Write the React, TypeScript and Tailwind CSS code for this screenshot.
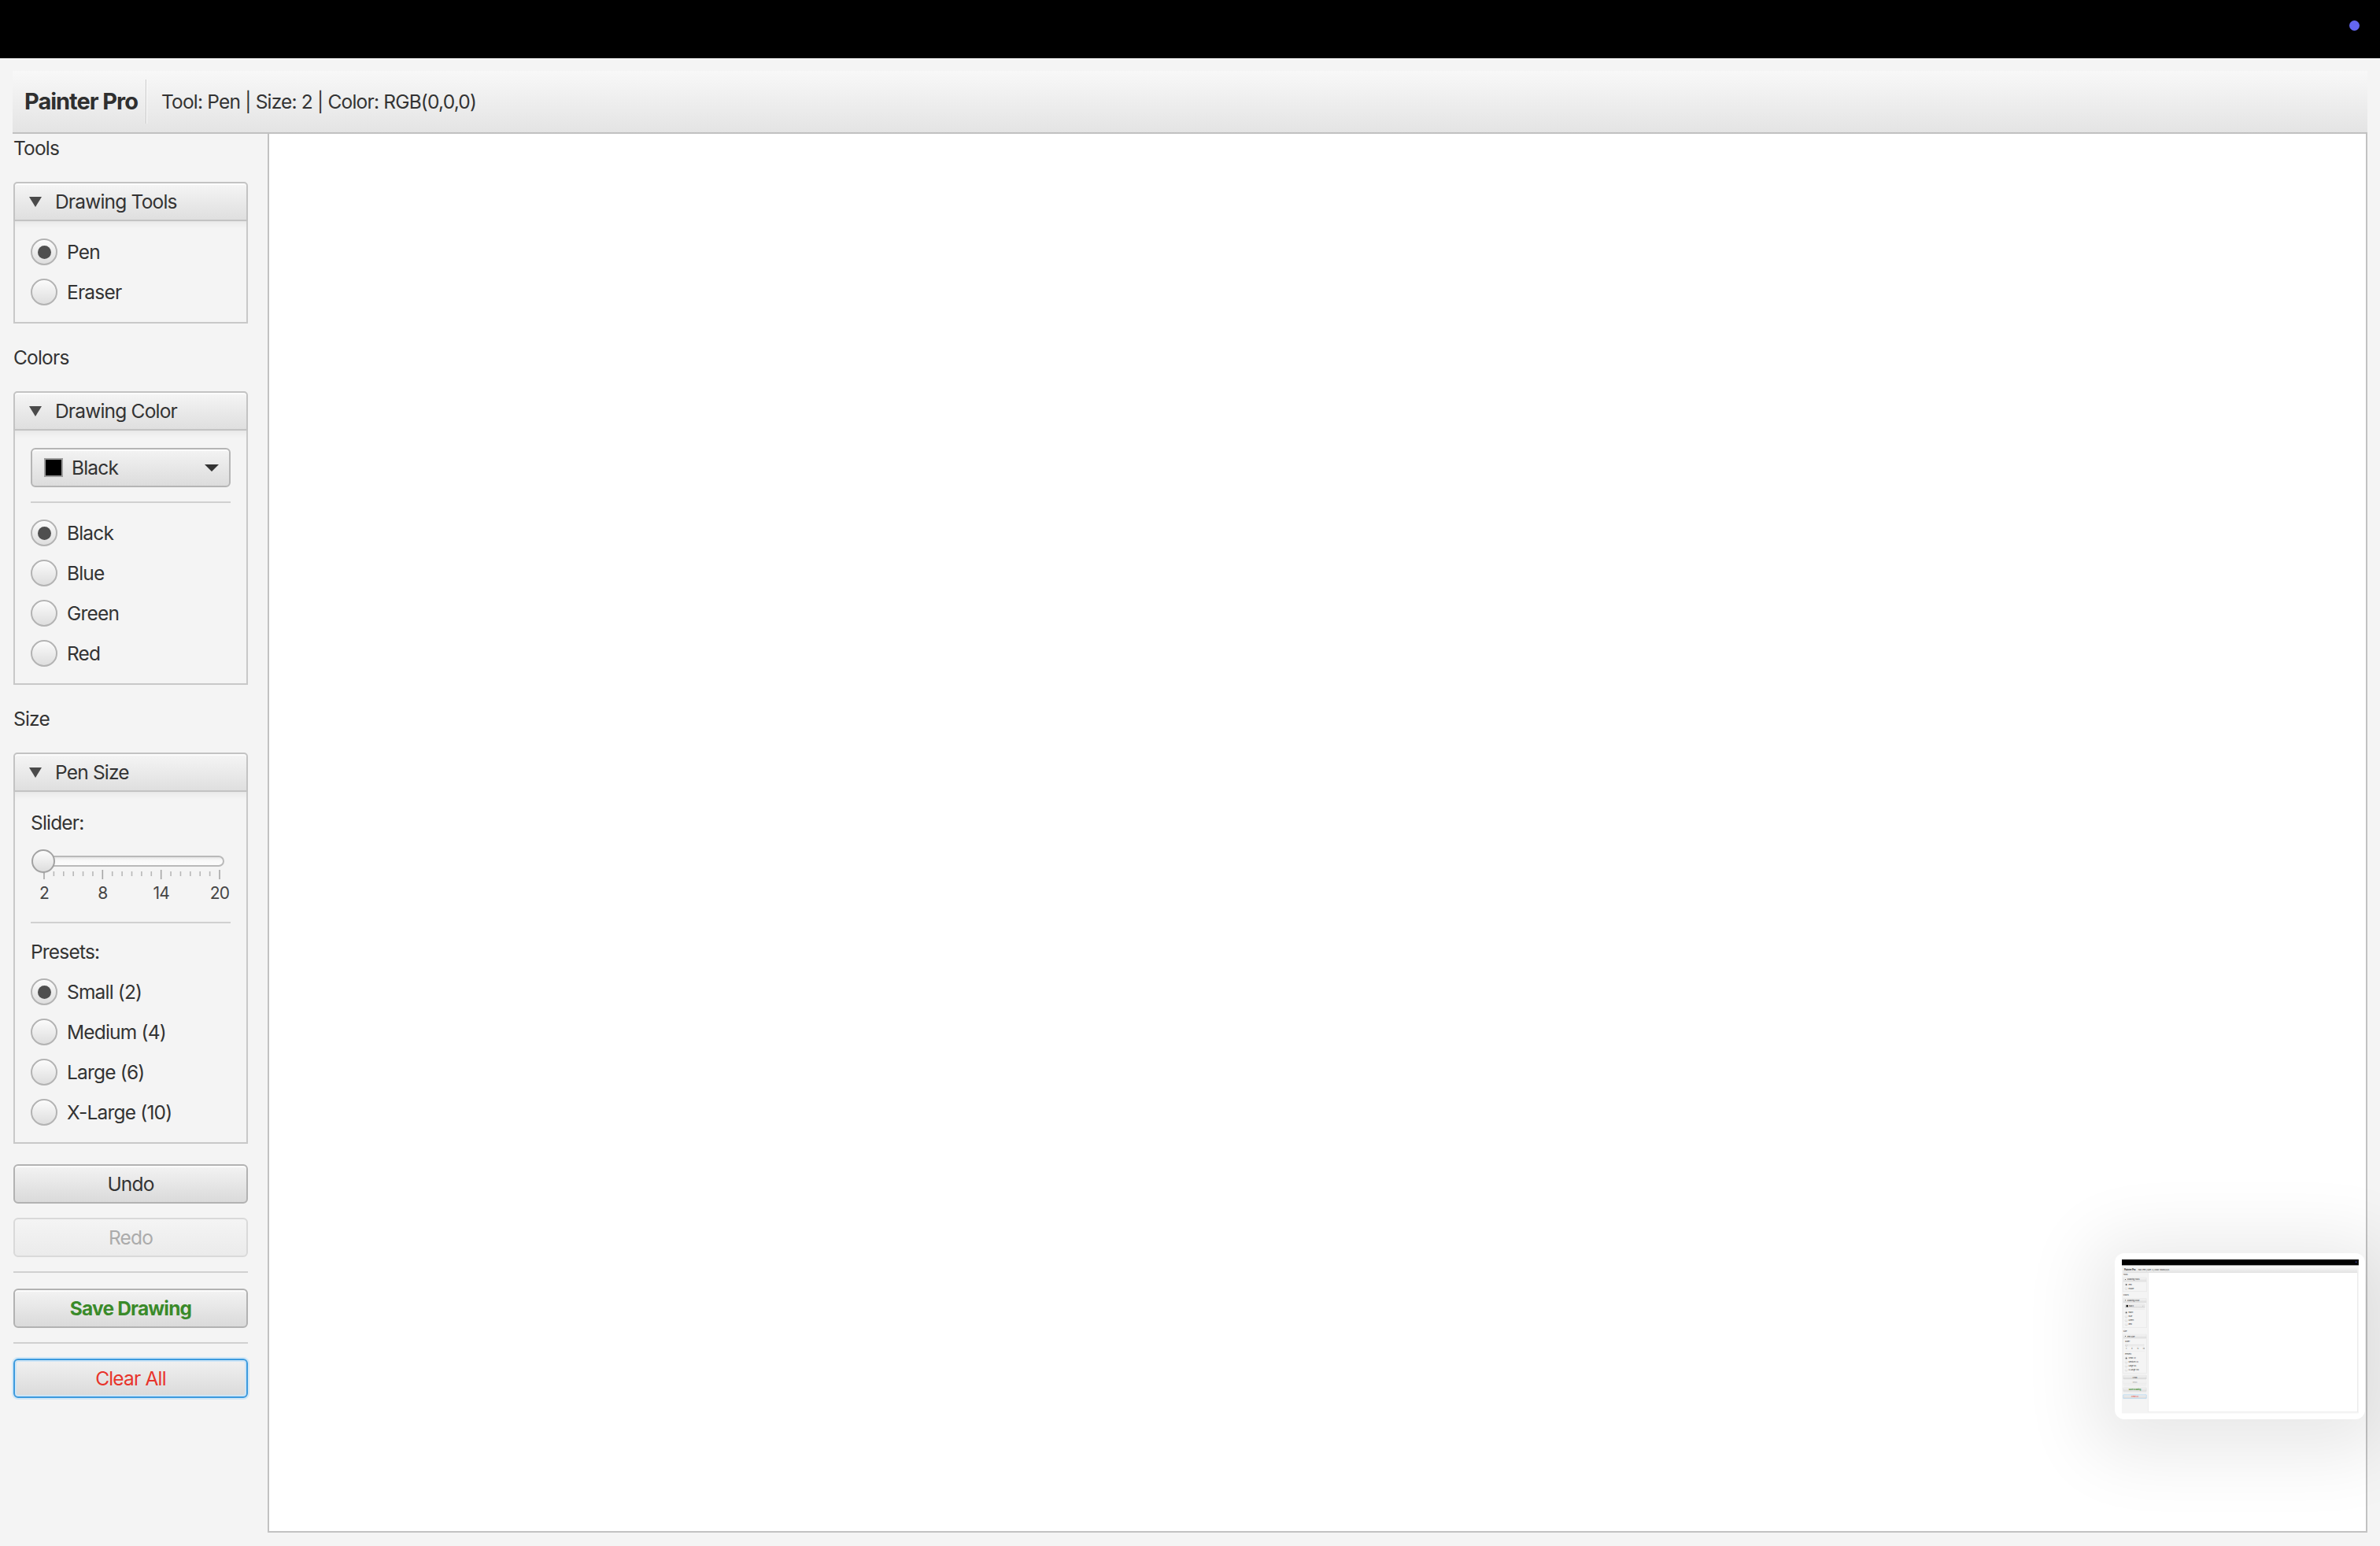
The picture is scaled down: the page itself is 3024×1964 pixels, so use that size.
import React, { useId } from 'react'

type RadioProps = { label: string; checked?: boolean }

function Radio({ label, checked = false }: RadioProps) {
  return (
    <div className="flex h-[34px] items-center">
      <span className="flex h-[34px] w-[34px] items-center justify-center rounded-full border-2 border-[#b3b3b3] bg-linear-to-b from-[#fbfbfb] to-[#dedede] shadow-[inset_0_1px_0_#ffffff]">
        {checked && <span className="h-[17px] w-[17px] rounded-full bg-[#4f4f4f]" />}
      </span>
      <span className="ml-[12px]">{label}</span>
    </div>
  )
}

function SectionLabel({ children }: { children: React.ReactNode }) {
  return <div className="h-[34px] leading-[34px]">{children}</div>
}

function Divider({ className = '' }: { className?: string }) {
  return <div className={'h-[2px] bg-[#d0d0d0] ' + className} />
}

function TitledPane({ title, children }: { title: string; children: React.ReactNode }) {
  return (
    <div className="w-[298px]">
      <div className="flex h-[50px] items-center rounded-t-[5px] border-2 border-[#c3c3c3] bg-linear-to-b from-[#f5f5f5] to-[#dfdfdf] pl-[18px] shadow-[inset_0_2px_0_#fcfcfc]">
        <svg width="16" height="13" viewBox="0 0 16 13">
          <polygon points="0,0 16,0 8,13" fill="#4a4a4a" />
        </svg>
        <span className="ml-[17px]">{title}</span>
      </div>
      <div className="flex flex-col border-2 border-t-0 border-[#c8c8c8] px-[20px] pt-[22px] pb-[21px] shadow-[inset_0_10px_10px_-8px_rgba(0,0,0,0.07)]">
        {children}
      </div>
    </div>
  )
}

function ColorCombo() {
  return (
    <div className="flex h-[50px] items-center rounded-[6px] border-2 border-[#b5b5b5] bg-linear-to-b from-[#f3f3f3] to-[#dcdcdc] pl-[15px] pr-[13px] shadow-[inset_0_2px_0_#fbfbfb]">
      <span className="h-[24px] w-[24px] border-2 border-[#9c9c9c] bg-black" />
      <span className="ml-[11px]">Black</span>
      <svg className="ml-auto" width="18" height="9" viewBox="0 0 18 9">
        <polygon points="0,0 18,0 9,9" fill="#333333" />
      </svg>
    </div>
  )
}

function SizeSlider() {
  const gid = useId().replace(/:/g, '')
  const first = 17
  const last = 240
  const step = (last - first) / 18
  const ticks = Array.from({ length: 19 }, (_, i) => i)
  const majors = [
    { x: first, v: '2' },
    { x: first + step * 6, v: '8' },
    { x: first + step * 12, v: '14' },
    { x: last, v: '20' },
  ]
  return (
    <svg className="mt-[10px]" width="254" height="80" viewBox="0 0 254 80">
      <defs>
        <linearGradient id={'thumb' + gid} x1="0" y1="0" x2="0" y2="1">
          <stop offset="0" stopColor="#fdfdfd" />
          <stop offset="1" stopColor="#dcdcdc" />
        </linearGradient>
        <linearGradient id={'track' + gid} x1="0" y1="0" x2="0" y2="1">
          <stop offset="0" stopColor="#e2e2e2" />
          <stop offset="0.4" stopColor="#f8f8f8" />
          <stop offset="1" stopColor="#fcfcfc" />
        </linearGradient>
      </defs>
      <rect x="14" y="16" width="231" height="12" rx="6" fill={'url(#track' + gid + ')'} stroke="#b9b9b9" strokeWidth="2" />
      {ticks.map(i => {
        const major = i % 6 === 0
        const x = first + step * i
        return (
          <line
            key={i}
            x1={x}
            x2={x}
            y1={major ? 33 : 35}
            y2={major ? 45 : 41}
            stroke={major ? '#a6a6a6' : '#b8b8b8'}
            strokeWidth="1.6"
          />
        )
      })}
      <circle cx="16" cy="23" r="14.5" fill="rgba(0,0,0,0.08)" />
      <circle cx="16" cy="22" r="14" fill={'url(#thumb' + gid + ')'} stroke="#a2a2a2" strokeWidth="2" />
      {majors.map(m => (
        <text
          key={m.v}
          x={m.x}
          y="70"
          textAnchor="middle"
          fontSize="21"
          fill="#454545"
          fontFamily="Inter, sans-serif"
        >
          {m.v}
        </text>
      ))}
    </svg>
  )
}

type BtnKind = 'normal' | 'disabled' | 'save' | 'focus'

function SideButton({ label, kind = 'normal' }: { label: string; kind?: BtnKind }) {
  const base = 'flex h-[50px] w-[298px] items-center justify-center rounded-[6px] border-2 '
  const styles: Record<BtnKind, string> = {
    normal: 'border-[#b2b2b2] bg-linear-to-b from-[#f3f3f3] to-[#dadada] shadow-[inset_0_2px_0_#fbfbfb] text-[#333]',
    disabled: 'border-[#d9d9d9] bg-linear-to-b from-[#f4f4f4] to-[#ebebeb] text-[#ababab]',
    save: 'border-[#b2b2b2] bg-linear-to-b from-[#f3f3f3] to-[#dadada] shadow-[inset_0_2px_0_#fbfbfb] font-bold text-[#3a8a2a]',
    focus:
      'border-[#3c9ade] bg-linear-to-b from-[#f1f1f1] to-[#dadada] shadow-[0_0_0_2px_#d2e8f7,inset_0_0_0_2px_#cfe5f5] text-[#e8342b]',
  }
  return <div className={base + styles[kind]}>{label}</div>
}

function Screen() {
  return (
    <div className="flex h-[1964px] w-[3024px] flex-col bg-[#f4f4f4] font-['Inter',sans-serif] text-[24.5px] tracking-[-0.033em] text-[#333]">
      {/* top black strip */}
      <div className="flex h-[74px] shrink-0 justify-end bg-black pt-[26px] pr-[26px]">
        <span className="h-[13px] w-[13px] rounded-full bg-[#6366f1]" />
      </div>

      <div className="flex min-h-0 flex-1 flex-col px-4 pt-4 pb-[17px]">
        {/* toolbar */}
        <div className="flex h-[80px] shrink-0 items-center border-b-2 border-[#c1c1c1] bg-linear-to-b from-[#f8f8f8] to-[#e4e4e4] pl-[15px]">
          <span className="text-[29px] font-bold tracking-[-0.035em] text-[#2f2f2f]">Painter Pro</span>
          <span className="ml-[10px] h-[56px] w-[2px] border-l border-[#c9c9c9] bg-white" />
          <span className="ml-[18px]">Tool: Pen | Size: 2 | Color: RGB(0,0,0)</span>
        </div>

        <div className="flex min-h-0 flex-1">
          {/* sidebar */}
          <div className="flex w-[324px] shrink-0 flex-col pt-[1px] pl-[1px]">
            <SectionLabel>Tools</SectionLabel>
            <div className="mt-[26px]">
              <TitledPane title="Drawing Tools">
                <div className="flex flex-col gap-[17px]">
                  <Radio label="Pen" checked />
                  <Radio label="Eraser" />
                </div>
              </TitledPane>
            </div>

            <div className="mt-[26px]">
              <SectionLabel>Colors</SectionLabel>
            </div>
            <div className="mt-[26px]">
              <TitledPane title="Drawing Color">
                <ColorCombo />
                <Divider className="mt-[18px] mb-[21px]" />
                <div className="flex flex-col gap-[17px]">
                  <Radio label="Black" checked />
                  <Radio label="Blue" />
                  <Radio label="Green" />
                  <Radio label="Red" />
                </div>
              </TitledPane>
            </div>

            <div className="mt-[26px]">
              <SectionLabel>Size</SectionLabel>
            </div>
            <div className="mt-[26px]">
              <TitledPane title="Pen Size">
                <SectionLabel>Slider:</SectionLabel>
                <SizeSlider />
                <Divider className="mt-[19px] mb-[19px]" />
                <SectionLabel>Presets:</SectionLabel>
                <div className="mt-[17px] flex flex-col gap-[17px]">
                  <Radio label="Small (2)" checked />
                  <Radio label="Medium (4)" />
                  <Radio label="Large (6)" />
                  <Radio label="X-Large (10)" />
                </div>
              </TitledPane>
            </div>

            <div className="mt-[26px] flex flex-col">
              <SideButton label="Undo" />
              <div className="mt-[18px]">
                <SideButton label="Redo" kind="disabled" />
              </div>
              <Divider className="mt-[18px] mb-[20px] w-[298px]" />
              <SideButton label="Save Drawing" kind="save" />
              <Divider className="mt-[18px] mb-[19px] w-[298px]" />
              <SideButton label="Clear All" kind="focus" />
            </div>
          </div>

          {/* drawing canvas */}
          <div className="min-w-0 flex-1 border-2 border-t-0 border-[#c2c2c2] bg-white" />
        </div>
      </div>
    </div>
  )
}

export default function App() {
  return (
    <div className="relative h-[1964px] w-[3024px] overflow-hidden">
      <Screen />

      {/* floating screenshot preview */}
      <div className="absolute right-[19px] bottom-[161px] flex h-[211px] w-[318px] items-center justify-center rounded-[12px] bg-white shadow-[0_14px_90px_30px_rgba(0,0,0,0.09)]">
        <div className="h-[196px] w-[301px] overflow-hidden">
          <div className="origin-top-left scale-[0.0995]">
            <Screen />
          </div>
        </div>
      </div>
    </div>
  )
}
